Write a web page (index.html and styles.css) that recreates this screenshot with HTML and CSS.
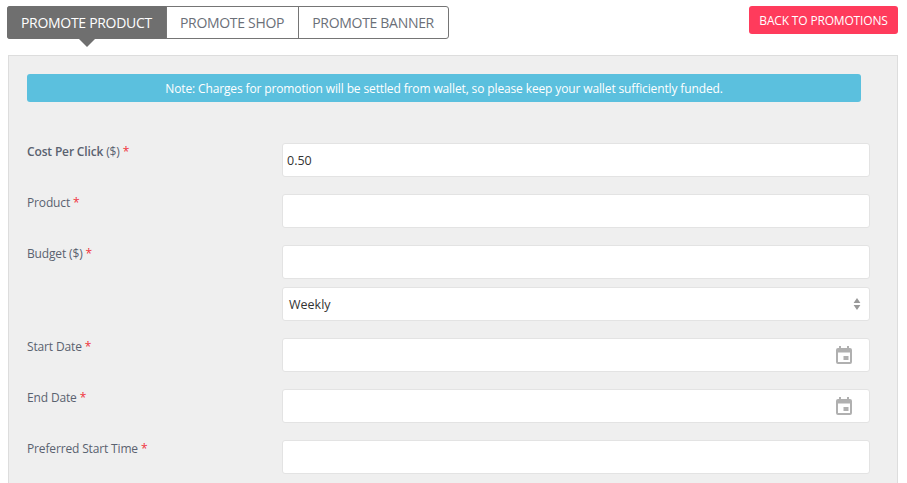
FILE: index.html
```html
<!DOCTYPE html>
<html lang="en">
<head>
<meta charset="utf-8">
<title>Promote Product</title>
<link rel="stylesheet" href="styles.css">
</head>
<body>
<div class="topbar">
  <div class="tabs">
    <a class="tab active">PROMOTE PRODUCT</a>
    <a class="tab">PROMOTE SHOP</a>
    <a class="tab">PROMOTE BANNER</a>
  </div>
  <a class="back">BACK TO PROMOTIONS</a>
</div>
<div class="panel">
  <div class="note">Note: Charges for promotion will be settled from wallet, so please keep your wallet sufficiently funded.</div>
  <form class="form">
    <div class="row">
      <label class="label"><strong class="strong">Cost Per Click</strong> ($) <span class="req">*</span></label>
      <div class="field"><input class="input text" value="0.50"></div>
    </div>
    <div class="row">
      <label class="label">Product <span class="req">*</span></label>
      <div class="field"><input class="input text"></div>
    </div>
    <div class="row">
      <label class="label">Budget ($) <span class="req">*</span></label>
      <div class="field stack">
        <input class="input text">
        <div class="input select">Weekly
          <svg class="updown" viewBox="0 0 8 14" width="8" height="14"><path d="M4 1 7.4 6H.6z M4 13 .6 8h6.800z" fill="#999"/></svg>
        </div>
      </div>
    </div>
    <div class="row">
      <label class="label">Start Date <span class="req">*</span></label>
      <div class="field"><div class="input date">
        <svg class="cal" viewBox="0 0 16 18" width="16" height="18"><path fill="#b0b0b0" d="M3 0h2v2h6V0h2v2h1a2 2 0 0 1 2 2v12a2 2 0 0 1-2 2H2a2 2 0 0 1-2-2V4a2 2 0 0 1 2-2h1zM2 6.500V16h12V6.500z"/><rect x="7.500" y="10" width="5" height="4" fill="#b0b0b0"/></svg>
      </div></div>
    </div>
    <div class="row">
      <label class="label">End Date <span class="req">*</span></label>
      <div class="field"><div class="input date">
        <svg class="cal" viewBox="0 0 16 18" width="16" height="18"><path fill="#b0b0b0" d="M3 0h2v2h6V0h2v2h1a2 2 0 0 1 2 2v12a2 2 0 0 1-2 2H2a2 2 0 0 1-2-2V4a2 2 0 0 1 2-2h1zM2 6.500V16h12V6.500z"/><rect x="7.500" y="10" width="5" height="4" fill="#b0b0b0"/></svg>
      </div></div>
    </div>
    <div class="row">
      <label class="label">Preferred Start Time <span class="req">*</span></label>
      <div class="field"><input class="input text"></div>
    </div>
  </form>
</div>
</body>
</html>
```
FILE: styles.css
```css
html, body { margin: 0; padding: 0; height: 483px; overflow: hidden; background: #fff; }
body { font-family: "Open Sans", sans-serif; font-size: 12px; color: #555; padding: 6px 9px 0 7px; box-sizing: border-box; }
a { text-decoration: none; }
.topbar { display: flex; justify-content: space-between; align-items: flex-start; }
.tabs { display: flex; height: 33px; box-sizing: border-box; border: 1px solid #757575; border-radius: 3px; background: #fff; }
.tab { display: flex; align-items: center; padding: 0 14px 0 13px; font-size: 14px; color: #6b6f78; border-left: 1px solid #757575; position: relative; letter-spacing: -.3px; }
.tab:first-child { border-left: 0; }
.tab.active { background: #6f6f6f; color: #fff; margin: -1px 0 -1px -1px; padding: 0 14px; border-radius: 3px 0 0 3px; }
.tab.active::after { content: ""; position: absolute; left: 72px; top: 100%; border: 8px solid transparent; border-top-color: #6f6f6f; border-bottom: 0; }
.back { height: 28px; width: 149px; display: flex; align-items: center; justify-content: center; background: #ff3b5c; color: #fff; font-size: 12px; letter-spacing: -.17px; border-radius: 3px; }
.panel { margin: 16px 0 0 1px; border: 1px solid #ddd; background: #efefef; padding: 18px 27px 0 18px; height: 440px; box-sizing: border-box; }
.note { margin-right: 9px; height: 28px; display: flex; align-items: center; justify-content: center; background: #5bc0de; color: #fff; font-size: 12px; font-weight: 500; letter-spacing: -.13px; border-radius: 3px; }
.form { display: flex; flex-direction: column; gap: 17px; margin-top: 41px; }
.row { display: grid; grid-template-columns: 255px 588px; }
.label { line-height: 17px; color: #5a6270; font-size: 12px; letter-spacing: -.15px; }
.strong { font-weight: 600; }
.req { color: #f0323c; }
.field { display: flex; flex-direction: column; }
.stack { gap: 8px; }
.input { display: flex; align-items: center; box-sizing: border-box; width: 588px; height: 34px; padding: 0 6px; border: 1px solid #e3e3e3; border-radius: 3px; background: #fff; font: 12.5px "Open Sans", sans-serif; color: #333; outline: 0; }
.text { padding: 0 4px; }
.select, .date { justify-content: space-between; }
.updown { margin-right: 2px; }
.date { justify-content: flex-end; }
.cal { margin-right: 11px; }
```
